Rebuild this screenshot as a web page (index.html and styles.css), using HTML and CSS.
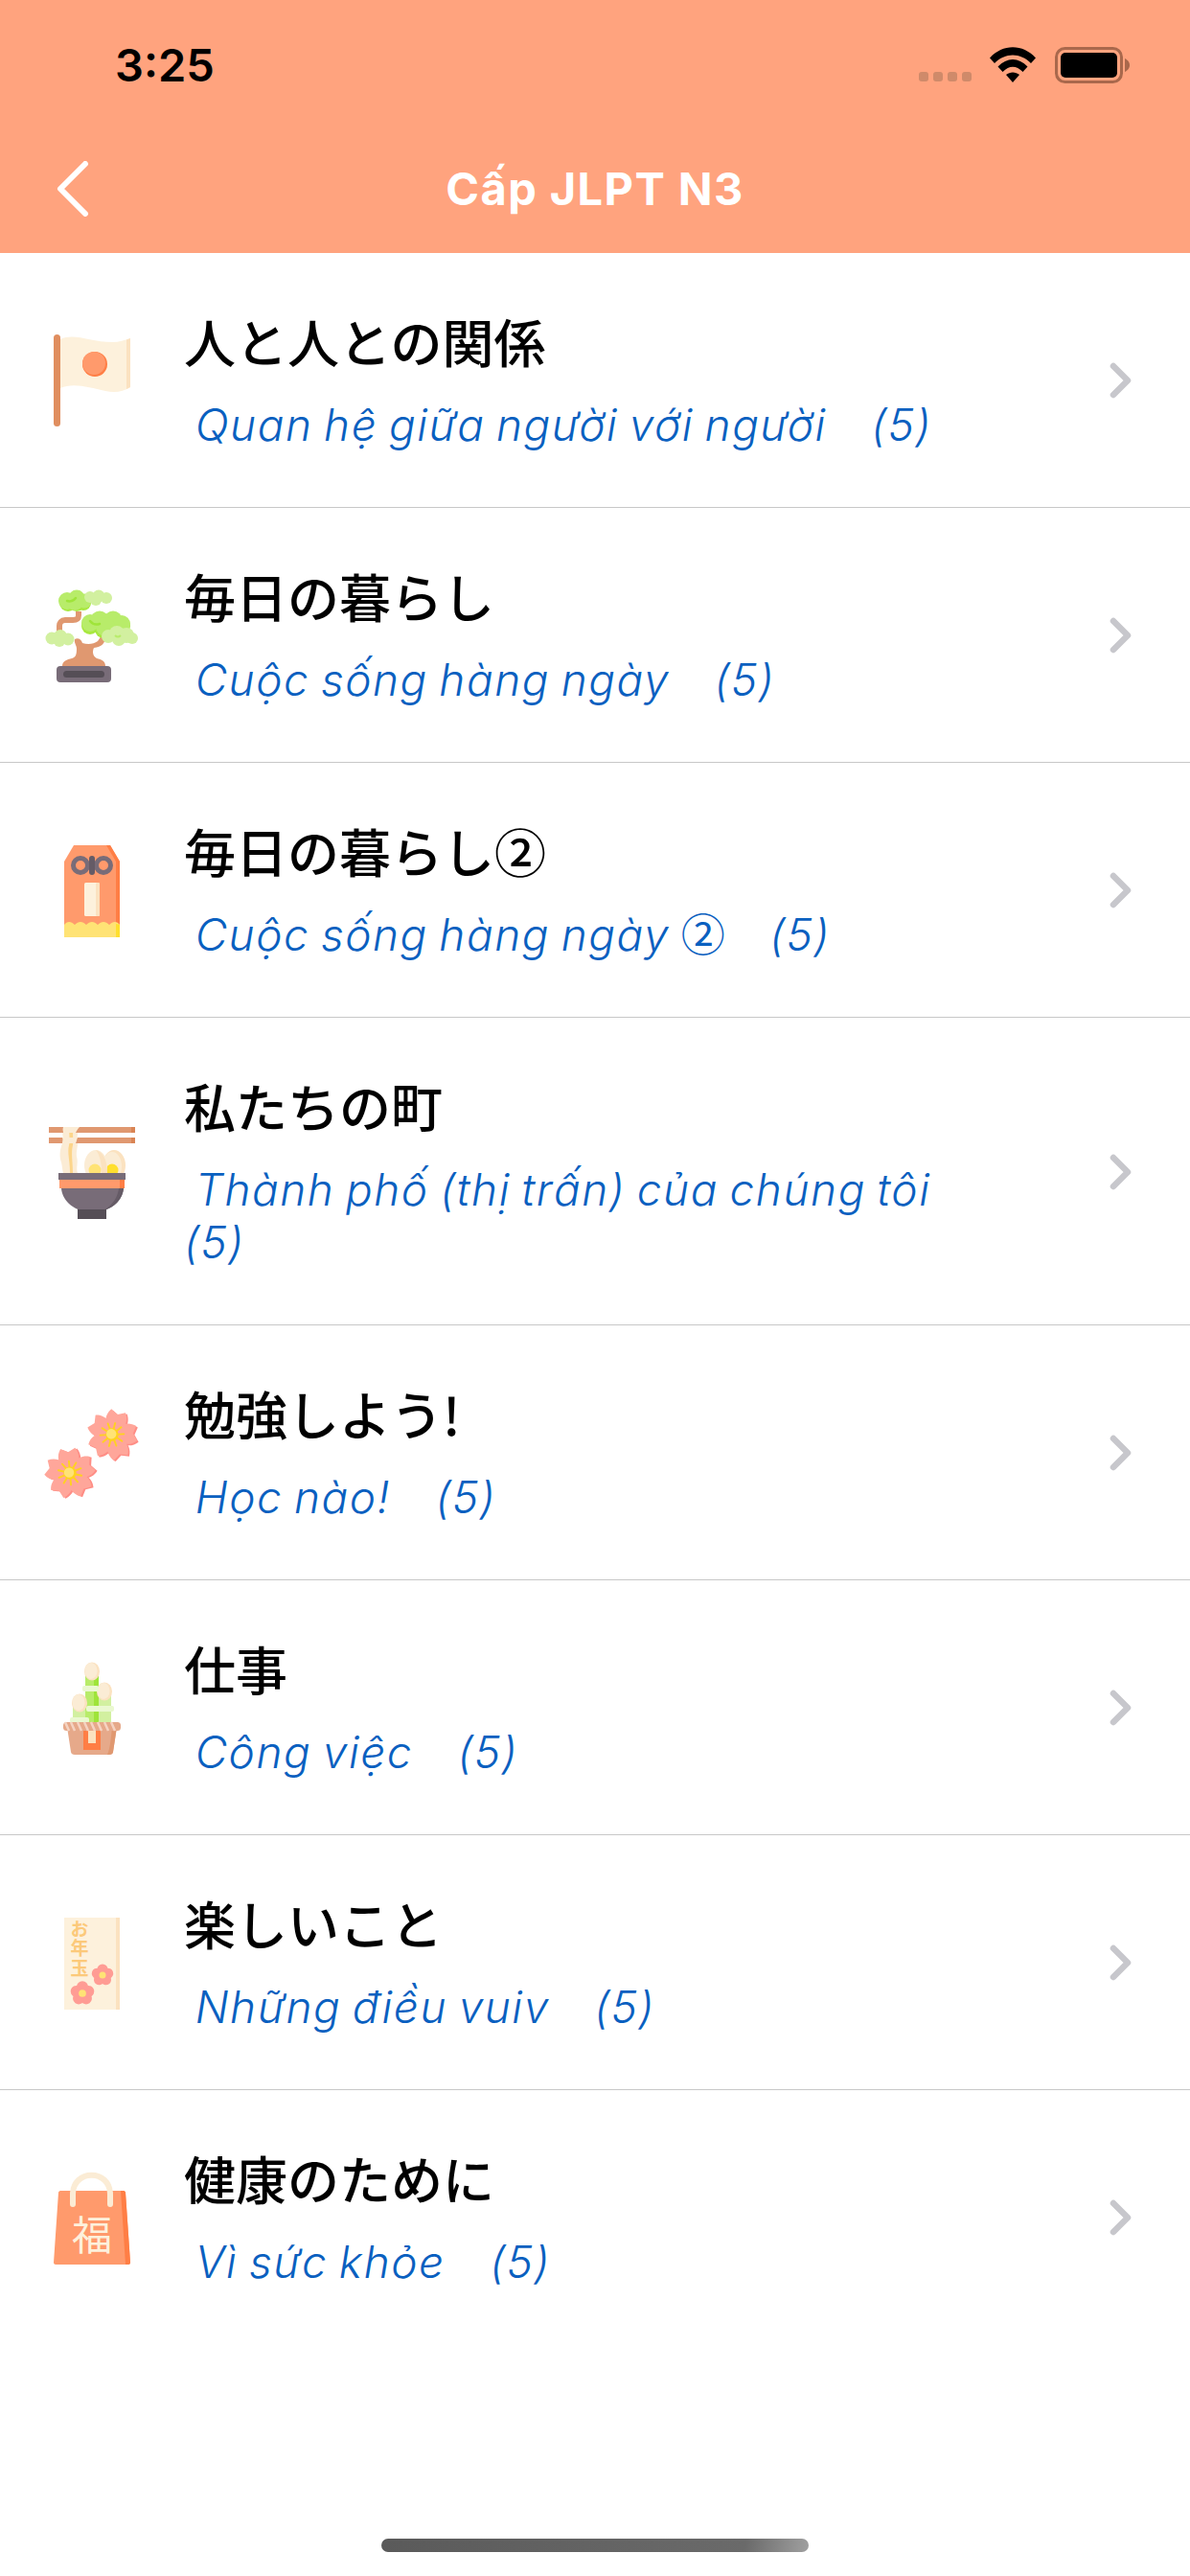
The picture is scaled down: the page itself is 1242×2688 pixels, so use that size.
FILE: index.html
```html
<!DOCTYPE html>
<html lang="vi">
<head>
    <meta charset="UTF-8">
    <meta name="viewport" content="width=device-width, initial-scale=1.0">
    <title>Cấp JLPT N3</title>
    <link rel="stylesheet" href="styles.css">
</head>
<body>

<div class="header">
    <div class="statusbar">
        <span class="time">3:25</span>
        <div class="status-icons">
            <div class="signal"><i></i><i></i><i></i><i></i></div>
            <svg class="wifi" viewBox="0 0 48 37"><path d="M0 11.500C13.500 -3.500 34.500 -3.500 48 11.500L43 17C32 5.500 16 5.500 5 17Z"/><path d="M8.500 20.500C18 10.500 30 10.500 39.500 20.500L34.500 26C27.500 19 20.500 19 13.500 26Z"/><path d="M17 29C21 25.500 27 25.500 31 29L24 37Z"/></svg>
            <svg class="battery" viewBox="0 0 78 38"><rect x="1.500" y="1.500" width="68" height="35" rx="9" fill="none" stroke="#a9684c" stroke-width="3"/><rect x="6" y="6" width="59" height="26" rx="5"/><path d="M73 12C77 14 78 17 78 19C78 21 77 24 73 26Z" fill="#a9684c"/></svg>
        </div>
    </div>
    <div class="navbar">
        <svg class="back" viewBox="0 0 36 58"><path d="M31 3L5 29L31 55" fill="none" stroke="#fff" stroke-width="6" stroke-linecap="round" stroke-linejoin="round"/></svg>
        <h1>Cấp JLPT N3</h1>
    </div>
</div>

<div class="lesson-list">

    <div class="lesson">
        <svg class="lesson-icon" viewBox="0 0 96 96">
            <path d="M15 5C30 -2 45 8 70 8C76 8 82 6 88 4V55C80 60 72 61 62 59C45 55 28 50 15 56Z" fill="#fdf1dc"/>
            <path d="M84 5.500L88 4V55L84 57Z" fill="#fbe2c0"/>
            <circle cx="51" cy="31" r="13" fill="#ff7e45"/>
            <circle cx="50" cy="30" r="12" fill="#ff9a6c"/>
            <rect x="8" y="0" width="7" height="96" rx="3.500" fill="#e08e5f"/>
        </svg>
        <div class="lesson-text">
            <div class="lesson-title">人と人との関係</div>
            <div class="lesson-sub"> Quan hệ giữa người với người    (5)</div>
        </div>
        <svg class="chevron" viewBox="0 0 24 38"><path d="M4 4L19 19L4 34" fill="none" stroke="#c7c7cc" stroke-width="6.500" stroke-linecap="round" stroke-linejoin="round"/></svg>
    </div>

    <div class="lesson">
        <svg class="lesson-icon" viewBox="0 0 96 96">
            <path d="M34 23V27C34 31 32 32 28 32H20C16 32 14 35 14 38V46" fill="none" stroke="#e09870" stroke-width="6"/>
            <path d="M17 80C17 75 22 73 27 72C31 71 32 68 32 62C32 58 29 56 30 52C33 50 37 52 38 56C44 58 50 57 54 54L58 48L62 50C62 56 58 60 50 61C48 65 49 70 53 72C58 73 62 75 62 80Z" fill="#e09870"/>
            <g fill="#a8e840">
                <circle cx="23" cy="14" r="9"/><circle cx="32" cy="14" r="9"/><circle cx="39" cy="14" r="8"/>
                <circle cx="46" cy="38" r="9"/><circle cx="60" cy="42" r="9"/><circle cx="79" cy="38" r="9"/>
            </g>
            <g fill="#b8ec6a">
                <circle cx="22" cy="12" r="9"/><circle cx="32" cy="9" r="8.500"/><circle cx="40" cy="12" r="7.500"/><circle cx="30" cy="13" r="9"/>
                <circle cx="46" cy="35" r="9"/><circle cx="56" cy="32" r="9.500"/><circle cx="70" cy="32" r="9.500"/><circle cx="79" cy="36" r="9"/><circle cx="62" cy="39" r="10"/>
            </g>
            <path d="M22 12C25 13 29 12 31 9M46 33C49 37 53 37 56 36" fill="none" stroke="#9fe43a" stroke-width="2.500" stroke-linecap="round"/>
            <g fill="#d2f0a0">
                <circle cx="46" cy="8" r="6"/><circle cx="55" cy="7" r="6.500"/><circle cx="63" cy="9" r="6"/><circle cx="52" cy="11" r="6"/>
                <circle cx="6" cy="51" r="6.500"/><circle cx="15" cy="49" r="7"/><circle cx="23" cy="52" r="6.500"/><circle cx="14" cy="54" r="6"/>
                <circle cx="65" cy="49" r="7"/><circle cx="74" cy="46" r="8"/><circle cx="84" cy="48" r="8"/><circle cx="90" cy="51" r="6"/><circle cx="76" cy="52" r="7"/>
            </g>
            <path d="M72 48C74 50 76 50 78 48" fill="none" stroke="#b8ec6a" stroke-width="2"/>
            <rect x="11" y="80" width="57" height="17" rx="4" fill="#786c78"/>
            <rect x="18" y="85" width="43" height="7" rx="3.500" fill="#554e56"/>
        </svg>
        <div class="lesson-text">
            <div class="lesson-title">毎日の暮らし</div>
            <div class="lesson-sub"> Cuộc sống hàng ngày    (5)</div>
        </div>
        <svg class="chevron" viewBox="0 0 24 38"><path d="M4 4L19 19L4 34" fill="none" stroke="#c7c7cc" stroke-width="6.500" stroke-linecap="round" stroke-linejoin="round"/></svg>
    </div>

    <div class="lesson">
        <svg class="lesson-icon" viewBox="0 0 96 96">
            <path d="M29 1H67L77 18V84H19V18Z" fill="#ff9a6c"/>
            <path d="M63 1H67L77 18V84H73V18Z" fill="#ff7e45"/>
            <path d="M19 97V84C22 80 26 80 30 84C34 80 38 80 42 84C46 80 50 80 54 84C58 80 62 80 66 84C70 80 74 80 77 84V97Z" fill="#ffe375"/>
            <path d="M73 83L77 84V97H73Z" fill="#ffdf2e"/>
            <circle cx="36" cy="22" r="7.500" fill="none" stroke="#786c78" stroke-width="5"/>
            <circle cx="60" cy="22" r="7.500" fill="none" stroke="#786c78" stroke-width="5"/>
            <rect x="45" y="12" width="6" height="20" rx="3" fill="#655b66"/>
            <rect x="40" y="40" width="16" height="35" rx="1.500" fill="#fdf1dc"/>
            <rect x="52" y="40" width="4" height="35" rx="1.500" fill="#fbe2c0"/>
        </svg>
        <div class="lesson-text">
            <div class="lesson-title">毎日の暮らし②</div>
            <div class="lesson-sub"> Cuộc sống hàng ngày <span class="circled">②</span>    (5)</div>
        </div>
        <svg class="chevron" viewBox="0 0 24 38"><path d="M4 4L19 19L4 34" fill="none" stroke="#c7c7cc" stroke-width="6.500" stroke-linecap="round" stroke-linejoin="round"/></svg>
    </div>

    <div class="lesson">
        <svg class="lesson-icon" viewBox="0 0 96 96">
            <path d="M18 1C16 8 19 12 17 18C14 26 14 32 16 38C17 42 17 46 18 49H33C31 44 34 38 32 32C31 26 34 20 33 14C32 9 34 5 35 1Z" fill="#fbecd5"/>
            <path d="M25 1C23 8 26 14 24 20C22 28 25 36 25 49H28C28 38 26 28 28 20C29 14 27 8 29 1Z" fill="#fcd58a"/>
            <rect x="3" y="1" width="90" height="6" fill="#e09870"/>
            <rect x="3" y="12" width="90" height="6" fill="#e09870"/>
            <rect x="89" y="1" width="4" height="6" fill="#d98454"/>
            <rect x="89" y="12" width="4" height="6" fill="#d98454"/>
            <path d="M18 1C17 4 18 5 18 7H31C32 5 33 3 35 1ZM17 12C18 14 17 16 17 18H31C32 16 32 14 33 12Z" fill="#fbecd5"/>
            <ellipse cx="71" cy="41" rx="12" ry="16" fill="#fbe2c0"/>
            <ellipse cx="69" cy="42" rx="10" ry="15" fill="#fbecd5"/>
            <circle cx="69" cy="46" r="6.500" fill="#ffdf2e"/>
            <ellipse cx="52" cy="41" rx="12" ry="16" fill="#fbecd5"/>
            <path d="M52 25C59 27 64 34 64 49H58C58 38 56 30 52 25Z" fill="#fbe2c0"/>
            <circle cx="51" cy="46" r="6.500" fill="#ffe375"/>
            <path d="M16 65H81C80 79 66 90 48 90C31 90 17 79 16 65Z" fill="#786c78"/>
            <path d="M76 65H81C80 76 72 85 60 88C70 82 75 74 76 65Z" fill="#655b66"/>
            <rect x="14" y="56" width="68" height="9" fill="#ff9a6c"/>
            <rect x="77" y="56" width="5" height="9" fill="#ff7e45"/>
            <rect x="13" y="49" width="70" height="7" fill="#786c78"/>
            <rect x="33" y="87" width="30" height="10" fill="#554e56"/>
        </svg>
        <div class="lesson-text">
            <div class="lesson-title">私たちの町</div>
            <div class="lesson-sub"> Thành phố (thị trấn) của chúng tôi    (5)</div>
        </div>
        <svg class="chevron" viewBox="0 0 24 38"><path d="M4 4L19 19L4 34" fill="none" stroke="#c7c7cc" stroke-width="6.500" stroke-linecap="round" stroke-linejoin="round"/></svg>
    </div>

    <div class="lesson">
        <svg class="lesson-icon" viewBox="0 0 96 96">
            <defs>
                <path id="petal" d="M0 0C-12 -6 -14 -19 -8 -27L0 -23L8 -27C14 -19 12 -6 0 0Z"/>
                <g id="petals">
                    <use href="#petal"/><use href="#petal" transform="rotate(72)"/><use href="#petal" transform="rotate(144)"/><use href="#petal" transform="rotate(216)"/><use href="#petal" transform="rotate(288)"/>
                </g>
                <g id="blossom">
                    <use href="#petals" fill="#ff8d85" transform="translate(2 1)"/>
                    <use href="#petals" fill="#ffa69a"/>
                    <path d="M0 -13V13M7.600 -10.500L-7.600 10.500M12.400 -4L-12.400 4M12.400 4L-12.400 -4M7.600 10.500L-7.600 -10.500" stroke="#ffd21f" stroke-width="2" stroke-linecap="round"/>
                    <circle r="7" fill="#ffd21f"/>
                    <circle cx="-1" cy="-0.500" r="5.500" fill="#ffe375"/>
                </g>
            </defs>
            <use href="#blossom" transform="translate(69 29) rotate(15) scale(.95)"/>
            <use href="#blossom" transform="translate(25 69) rotate(-5) scale(.95)"/>
        </svg>
        <div class="lesson-text">
            <div class="lesson-title">勉強しよう!</div>
            <div class="lesson-sub"> Học nào!    (5)</div>
        </div>
        <svg class="chevron" viewBox="0 0 24 38"><path d="M4 4L19 19L4 34" fill="none" stroke="#c7c7cc" stroke-width="6.500" stroke-linecap="round" stroke-linejoin="round"/></svg>
    </div>

    <div class="lesson">
        <svg class="lesson-icon" viewBox="0 0 96 96">
            <rect x="41" y="12" width="14" height="52" fill="#b8ec6a"/>
            <rect x="50" y="12" width="5" height="52" fill="#9fe43a"/>
            <rect x="55" y="30" width="13" height="34" fill="#d2f0a0"/>
            <rect x="28" y="44" width="13" height="20" fill="#d2f0a0"/>
            <ellipse cx="48" cy="10" rx="8" ry="9.500" fill="#fbe2c0"/>
            <ellipse cx="47" cy="9.500" rx="6.500" ry="8.500" fill="#fbecd5"/>
            <ellipse cx="61" cy="31" rx="8" ry="9.500" fill="#fbe2c0"/>
            <ellipse cx="60" cy="30.500" rx="6.500" ry="8.500" fill="#fbecd5"/>
            <ellipse cx="35" cy="43" rx="8" ry="9.500" fill="#fbe2c0"/>
            <ellipse cx="34" cy="42.500" rx="6.500" ry="8.500" fill="#fbecd5"/>
            <rect x="38" y="25" width="17" height="6" rx="2" fill="#eaf8d0"/>
            <rect x="42" y="46" width="29" height="6" rx="2" fill="#eaf8d0"/>
            <rect x="25" y="58" width="20" height="6" rx="2" fill="#eaf8d0"/>
            <path d="M22 68H74L70 94C70 96 68 97 66 97H30C28 97 26 96 26 94Z" fill="#e6a98a"/>
            <path d="M69 68H74L70 94C70 96 68 97 66 97H64C67 90 68 78 69 68Z" fill="#e09870"/>
            <rect x="39" y="72" width="18" height="20" fill="#ff7e45"/>
            <rect x="44" y="70" width="8" height="15" fill="#fbe2c0"/>
            <rect x="18" y="63" width="60" height="9" rx="3.500" fill="#e6a98a"/>
            <path d="M20 63L24 72M26 63L30 72M33 63L37 72M40 63L44 72M47 63L51 72M54 63L58 72M61 63L65 72M68 63L72 72" stroke="#f5d3c2" stroke-width="2.500"/>
        </svg>
        <div class="lesson-text">
            <div class="lesson-title">仕事</div>
            <div class="lesson-sub"> Công việc    (5)</div>
        </div>
        <svg class="chevron" viewBox="0 0 24 38"><path d="M4 4L19 19L4 34" fill="none" stroke="#c7c7cc" stroke-width="6.500" stroke-linecap="round" stroke-linejoin="round"/></svg>
    </div>

    <div class="lesson">
        <svg class="lesson-icon" viewBox="0 0 96 96">
            <defs>
                <g id="plum">
                    <g fill="#ff9c94">
                        <circle cy="-6" r="5.500"/><circle cy="-6" r="5.500" transform="rotate(72)"/><circle cy="-6" r="5.500" transform="rotate(144)"/><circle cy="-6" r="5.500" transform="rotate(216)"/><circle cy="-6" r="5.500" transform="rotate(288)"/>
                    </g>
                    <circle r="3.500" fill="#ffe375"/>
                </g>
            </defs>
            <rect x="19" y="1" width="58" height="96" fill="#fdf1dc"/>
            <rect x="73" y="1" width="4" height="96" fill="#fbe2c0"/>
            <text class="envelope-text" x="35" y="3">お年玉</text>
            <use href="#plum" transform="translate(59 61)"/>
            <use href="#plum" transform="translate(38 80) scale(1.100)"/>
        </svg>
        <div class="lesson-text">
            <div class="lesson-title">楽しいこと</div>
            <div class="lesson-sub"> Những điều vuiv    (5)</div>
        </div>
        <svg class="chevron" viewBox="0 0 24 38"><path d="M4 4L19 19L4 34" fill="none" stroke="#c7c7cc" stroke-width="6.500" stroke-linecap="round" stroke-linejoin="round"/></svg>
    </div>

    <div class="lesson">
        <svg class="lesson-icon" viewBox="0 0 96 96">
            <path d="M15 20H81C82 20 83 21 83 22L88 95C88 96 87 97 86 97H10C9 97 8 96 8 95L13 22C13 21 14 20 15 20Z" fill="#ff9a6c"/>
            <path d="M78 20H81C82 20 83 21 83 22L88 95C88 96 87 97 86 97H83Z" fill="#ff7e45"/>
            <path d="M28 34V24C28 -3 67 -3 67 24V34" fill="none" stroke="#fbecd5" stroke-width="6" stroke-linecap="round"/>
            <text class="bag-text" x="48" y="82">福</text>
        </svg>
        <div class="lesson-text">
            <div class="lesson-title">健康のために</div>
            <div class="lesson-sub"> Vì sức khỏe    (5)</div>
        </div>
        <svg class="chevron" viewBox="0 0 24 38"><path d="M4 4L19 19L4 34" fill="none" stroke="#c7c7cc" stroke-width="6.500" stroke-linecap="round" stroke-linejoin="round"/></svg>
    </div>

</div>

<div class="home-area">
    <div class="home-bar"></div>
</div>

</body>
</html>
```

FILE: styles.css
```css
* {
    box-sizing: border-box;
    margin: 0;
    padding: 0;
}

body {
    width: 1242px;
    height: 2688px;
    display: flex;
    flex-direction: column;
    overflow: hidden;
    background-color: #fff;
    color: #000;
    font-family: 'Inter', 'Noto Sans CJK JP', sans-serif;
}

.header {
    height: 264px;
    background-color: #ffa37e;
}

.statusbar {
    height: 136px;
    padding: 42px 63px 0 120px;
    display: flex;
    justify-content: space-between;
    align-items: flex-start;
}

.time {
    font-family: 'Inter', sans-serif;
    font-size: 47px;
    line-height: 52px;
    font-weight: 600;
}

.status-icons {
    display: flex;
    align-items: flex-start;
    padding-top: 7px;
}

.signal {
    display: flex;
    gap: 5px;
    margin-top: 26px;
    margin-right: 19px;
}

.signal i {
    width: 10px;
    height: 10px;
    border-radius: 3px;
    background-color: #cf8a6a;
}

.wifi {
    width: 48px;
    height: 37px;
    margin-right: 20px;
}

.battery {
    width: 78px;
    height: 38px;
}

.navbar {
    position: relative;
    height: 128px;
    display: flex;
    align-items: center;
    justify-content: center;
}

.navbar h1 {
    font-size: 47px;
    line-height: 56px;
    font-weight: 700;
    letter-spacing: 1.4px;
    color: #fff;
    margin-top: -6px;
}

.back {
    position: absolute;
    left: 58px;
    top: 32px;
    width: 36px;
    height: 58px;
}

.lesson-list {
    flex: 1;
}

.lesson {
    display: flex;
    align-items: center;
    padding: 59px 60px 58px 48px;
    border-bottom: 1px solid #c8c8c8;
}

.lesson:last-child {
    border-bottom: none;
}

.lesson-icon {
    width: 96px;
    height: 96px;
    flex-shrink: 0;
    overflow: visible;
}

.lesson-text {
    flex: 1;
    margin-left: 48px;
    margin-right: 122px;
}

.lesson-title {
    font-family: 'Noto Sans CJK JP', sans-serif;
    font-size: 54px;
    font-weight: 500;
    line-height: 65px;
    margin-bottom: 28px;
}

.lesson-sub {
    font-family: 'Inter', sans-serif;
    font-style: italic;
    font-weight: 300;
    font-size: 46px;
    line-height: 55px;
    letter-spacing: 1.5px;
    word-spacing: -2.8px;
    color: #0a60c0;
    white-space: pre-wrap;
}

.circled {
    font-family: 'Noto Sans CJK JP', sans-serif;
    font-style: normal;
    font-weight: 400;
    letter-spacing: 0;
    line-height: 1;
}

.chevron {
    width: 24px;
    height: 38px;
    flex-shrink: 0;
}

.envelope-text {
    font-family: 'Noto Sans CJK JP', sans-serif;
    font-size: 19px;
    font-weight: 700;
    letter-spacing: 1.5px;
    writing-mode: vertical-rl;
    fill: #fcc97a;
}

.bag-text {
    font-family: 'Noto Sans CJK JP', sans-serif;
    font-size: 42px;
    font-weight: 400;
    fill: #fdf1dc;
    text-anchor: middle;
}

.home-area {
    height: 39px;
    display: flex;
    justify-content: center;
}

.home-bar {
    width: 446px;
    height: 14px;
    border-radius: 7px;
    background: linear-gradient(100deg, #5a5a5a 0%, #6a6a6a 85%, #a0a0a0 100%);
}
```
